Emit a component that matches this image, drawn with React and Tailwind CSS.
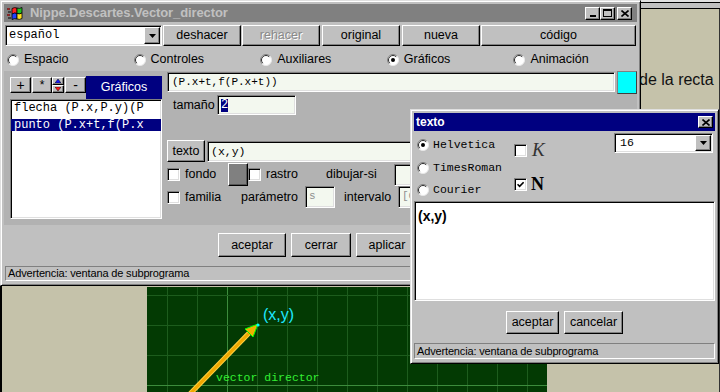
import React from "react";

const raised =
  "bg-[#c0c0c0] border border-t-white border-l-white border-r-black border-b-black shadow-[inset_-1px_-1px_0_#808080]";
const sunken =
  "border border-t-[#808080] border-l-[#808080] border-r-white border-b-white shadow-[inset_1px_1px_0_#000,inset_-1px_-1px_0_#dfdfdf]";
const thinSunken =
  "border border-t-[#808080] border-l-[#808080] border-r-white border-b-white";
const mono = "font-['Liberation_Mono','Courier_New',monospace]";

function Btn({ className = "", disabled, children }) {
  return (
    <div
      className={`flex items-center justify-center ${raised} ${
        disabled ? "text-[#8a8a8a] [text-shadow:1px_1px_0_#fff]" : "text-black"
      } ${className}`}
    >
      {children}
    </div>
  );
}

function Radio({ on }) {
  return (
    <svg width="12" height="12" viewBox="0 0 12 12" className="shrink-0">
      <circle cx="6" cy="6" r="5.6" fill="#fff" />
      <path d="M2.1 9.9A5.5 5.5 0 0 1 9.9 2.1" fill="none" stroke="#808080" strokeWidth="1" />
      <path d="M2.8 9.2A4.5 4.5 0 0 1 9.2 2.8" fill="none" stroke="#303030" strokeWidth="1" />
      <path d="M9.9 2.1A5.5 5.5 0 0 1 2.1 9.9" fill="none" stroke="#e8e8e8" strokeWidth="1" />
      {on && <circle cx="6" cy="6" r="2" fill="#000" />}
    </svg>
  );
}

function Check({ on }) {
  return (
    <div className={`flex h-[13px] w-[13px] shrink-0 items-center justify-center bg-white ${sunken}`}>
      {on && (
        <svg width="7" height="7" viewBox="0 0 7 7">
          <path d="M0.5 3.2 L2.6 5.4 L6.6 1.2" stroke="#000" strokeWidth="1.6" fill="none" />
        </svg>
      )}
    </div>
  );
}

function DropBtn() {
  return (
    <div className={`flex h-full w-[16px] shrink-0 items-center justify-center ${raised}`}>
      <svg width="7" height="4" viewBox="0 0 7 4">
        <path d="M0 0h7L3.5 4z" fill="#000" />
      </svg>
    </div>
  );
}

function CloseGlyph() {
  return (
    <svg width="8" height="7" viewBox="0 0 8 7">
      <path d="M0.5 0.5 L7.5 6.5 M7.5 0.5 L0.5 6.5" stroke="#000" strokeWidth="1.6" />
    </svg>
  );
}

function WinIcon() {
  return (
    <svg width="16" height="15" viewBox="0 0 16 15" className="shrink-0">
      <path d="M0 3h3M1 6h3M0 9h3M1 12h3" stroke="#000" strokeWidth="1" />
      <path d="M0.5 3h2M0.5 9h2" stroke="#f00" strokeWidth="1" />
      <path d="M5 2.5 Q7.5 1 10 2 V7.5 Q7.5 6.5 5 8 Z" fill="#ff2020" stroke="#000" strokeWidth="0.8" />
      <path d="M10 2 Q12.5 3 15 1.5 V7 Q12.5 8.5 10 7.5 Z" fill="#20c020" stroke="#000" strokeWidth="0.8" />
      <path d="M5 8 Q7.5 6.5 10 7.5 V13 Q7.5 12 5 13.5 Z" fill="#2040ff" stroke="#000" strokeWidth="0.8" />
      <path d="M10 7.5 Q12.5 8.5 15 7 V12.5 Q12.5 14 10 13 Z" fill="#ffe020" stroke="#000" strokeWidth="0.8" />
    </svg>
  );
}

function MainWindow() {
  const radios = ["Espacio", "Controles", "Auxiliares", "Gráficos", "Animación"];
  return (
    <div className="absolute left-0 top-0 z-10 flex h-[286px] w-[641px] flex-col border border-t-[#dfdfdf] border-l-[#dfdfdf] border-r-black border-b-black bg-[#c0c0c0] p-[3px] shadow-[inset_1px_1px_0_#fff,inset_-1px_-1px_0_#808080]">
      {/* title bar */}
      <div className="flex h-[18px] shrink-0 items-center bg-[#808080] pl-[3px] pr-[5px]">
        <WinIcon />
        <span className="ml-[7px] text-[13px] font-bold tracking-[-0.1px] text-[#c0c0c0]">
          Nippe.Descartes.Vector_director
        </span>
        <div className="ml-auto flex items-center">
          <div className={`flex h-[13px] w-[15px] items-end justify-center pb-[2px] ${raised}`}>
            <div className="h-[2px] w-[6px] bg-black" />
          </div>
          <div className={`flex h-[13px] w-[15px] items-center justify-center ${raised}`}>
            <div className="h-[8px] w-[9px] border border-t-2 border-black" />
          </div>
          <div className={`ml-[2px] flex h-[13px] w-[15px] items-center justify-center ${raised}`}>
            <CloseGlyph />
          </div>
        </div>
      </div>

      {/* top buttons */}
      <div className="mt-[3px] flex h-[21px] shrink-0 text-[12.5px]">
        <div className={`ml-[1px] flex w-[157px] bg-white p-[1px] ${sunken}`}>
          <span className={`${mono} flex-1 pl-[2px] text-[12px] leading-[17px]`}>español</span>
          <DropBtn />
        </div>
        <Btn className="ml-[1px] w-[78px]">deshacer</Btn>
        <Btn className="ml-[1px] w-[78px]" disabled>
          rehacer
        </Btn>
        <Btn className="ml-[2px] w-[78px]">original</Btn>
        <Btn className="ml-[2px] w-[78px]">nueva</Btn>
        <Btn className="ml-[1px] w-[155px]">código</Btn>
      </div>

      {/* sections */}
      <div className="mt-[2px] grid h-[23px] shrink-0 grid-cols-5 items-center text-[12.5px]">
        {radios.map((r) => (
          <div key={r} className="flex items-center gap-[5px] pl-[3px]">
            <Radio on={r === "Gráficos"} />
            <span>{r}</span>
          </div>
        ))}
      </div>

      {/* graphics panel */}
      <div className="flex h-[154px] shrink-0 bg-[#b2b2b2] text-[12.5px]">
        <div className="ml-[6px] mt-[5px] flex w-[152px] flex-col">
          <div className="flex h-[23px]">
            <div className="mt-[1px] flex h-[16px]">
              <Btn className="w-[21px] text-[14px]">+</Btn>
              <Btn className="ml-[1px] w-[20px] text-[12px]">*</Btn>
              <div className="flex w-[12px] flex-col">
                <div className={`flex h-[8px] items-center justify-center ${raised}`}>
                  <svg width="6" height="4" viewBox="0 0 6 4">
                    <path d="M0 4h6L3 0z" fill="#1a1aff" stroke="#000" strokeWidth="0.5" />
                  </svg>
                </div>
                <div className={`flex h-[8px] items-center justify-center ${raised}`}>
                  <svg width="6" height="4" viewBox="0 0 6 4">
                    <path d="M0 0h6L3 4z" fill="#ff1a1a" stroke="#000" strokeWidth="0.5" />
                  </svg>
                </div>
              </div>
              <Btn className="ml-[1px] w-[21px] text-[14px]">-</Btn>
            </div>
            <div className="flex flex-1 items-center justify-center bg-[#000080] text-white">Gráficos</div>
          </div>
          <div className={`h-[120px] bg-white pt-[1px] ${sunken} ${mono} text-[12px]`}>
            <div className="mt-[1px] h-[13px] whitespace-nowrap pl-[3px] leading-[13px]">flecha (P.x,P.y)(P</div>
            <div className="mt-[4px] h-[12px] whitespace-nowrap bg-[#000080] pl-[3px] leading-[12px] text-white">
              punto (P.x+t,f(P.x
            </div>
          </div>
        </div>

        <div className="ml-[5px] flex flex-1 flex-col">
          <div className="flex h-[23px] items-start">
            <div className={`mt-[1px] h-[20px] flex-1 bg-[#f3f8ef] pl-[4px] ${sunken} ${mono} text-[11px] leading-[18px]`}>
              (P.x+t,f(P.x+t))
            </div>
            <div className="ml-[2px] h-[23px] w-[20px] border border-t-[#808080] border-l-[#808080] border-r-[#404040] border-b-[#404040] bg-[#00ffff]" />
          </div>

          <div className="mt-[1px] flex h-[20px] items-center">
            <span className="w-[50px] pl-[6px]">tamaño</span>
            <div className={`flex h-[20px] w-[79px] items-center bg-[#f3f8ef] pl-[3px] ${sunken}`}>
              <span className={`${mono} bg-[#000080] text-[12px] leading-[13px] text-white`}>2</span>
            </div>
          </div>

          <div className="mt-[25px] flex h-[22px]">
            <Btn className="w-[38px]">texto</Btn>
            <div className={`ml-[2px] mt-[1px] h-[21px] flex-1 bg-[#f3f8ef] pl-[3px] ${sunken} ${mono} text-[11.5px] leading-[19px]`}>
              (x,y)
            </div>
          </div>

          <div className="mt-[1px] flex h-[23px] items-center">
            <div className="flex w-[61px] items-center gap-[5px]">
              <Check />
              <span>fondo</span>
            </div>
            <div className="h-[23px] w-[20px] border border-t-white border-l-white border-r-black border-b-black bg-[#808080] shadow-[inset_-1px_-1px_0_#555]" />
            <div className="flex w-[78px] items-center gap-[5px]">
              <Check />
              <span>rastro</span>
            </div>
            <span className="w-[68px]">dibujar-si</span>
            <div className={`h-[22px] flex-1 bg-[#f3f8ef] ${sunken}`} />
          </div>

          <div className="flex h-[22px] items-center">
            <div className="flex w-[74px] items-center gap-[5px]">
              <Check />
              <span>familia</span>
            </div>
            <span className="w-[64px]">parámetro</span>
            <div className={`h-[22px] w-[30px] bg-[#f3f8ef] pl-[3px] ${sunken} ${mono} text-[11px] leading-[19px] text-[#909090]`}>
              s
            </div>
            <span className="ml-[9px] w-[54px]">intervalo</span>
            <div className={`h-[22px] flex-1 bg-[#f3f8ef] pl-[3px] ${sunken} ${mono} text-[11px] leading-[19px] text-[#909090]`}>
              [0,1]
            </div>
          </div>
        </div>
      </div>

      {/* action buttons */}
      <div className="mt-[8px] flex h-[24px] shrink-0 gap-[5px] pl-[214px] text-[12.5px]">
        <Btn className="w-[68px]">aceptar</Btn>
        <Btn className="w-[60px]">cerrar</Btn>
        <Btn className="w-[62px]">aplicar</Btn>
        <Btn className="w-[62px]">ayuda</Btn>
      </div>

      <div className={`ml-[1px] mt-[9px] h-[15px] shrink-0 pl-[2px] text-[11px] leading-[13px] tracking-[-0.15px] ${thinSunken}`}>
        Advertencia: ventana de subprograma
      </div>
    </div>
  );
}

function TextDialog() {
  return (
    <div className="absolute left-[410px] top-[109px] z-20 flex h-[255px] w-[309px] flex-col border border-t-[#dfdfdf] border-l-[#dfdfdf] border-r-black border-b-black bg-[#c0c0c0] p-[3px] shadow-[inset_1px_1px_0_#fff,inset_-1px_-1px_0_#808080]">
      <div className="flex h-[18px] shrink-0 items-center bg-[#000080] pl-[2px] pr-[2px]">
        <span className="text-[12px] font-bold text-white">texto</span>
        <div className={`ml-auto flex h-[12px] w-[15px] items-center justify-center ${raised}`}>
          <CloseGlyph />
        </div>
      </div>

      <div className="flex h-[70px] shrink-0">
        <div className={`flex w-[100px] flex-col pl-[3px] pt-[2px] ${mono} text-[11.5px]`}>
          <div className="flex h-[23px] items-center gap-[4px]">
            <Radio on />
            <span>Helvetica</span>
          </div>
          <div className="flex h-[23px] items-center gap-[4px]">
            <Radio />
            <span>TimesRoman</span>
          </div>
          <div className="flex h-[22px] items-center gap-[4px]">
            <Radio />
            <span>Courier</span>
          </div>
        </div>
        <div className="flex w-[100px] flex-col">
          <div className="mt-[9px] flex h-[20px] items-center gap-[5px]">
            <Check />
            <span className="font-['Liberation_Serif',serif] text-[19px] italic leading-[20px] text-[#333]">K</span>
          </div>
          <div className="mt-[14px] flex h-[20px] items-center gap-[4px]">
            <Check on />
            <span className="font-['Liberation_Serif',serif] text-[18px] font-bold leading-[20px]">N</span>
          </div>
        </div>
        <div className={`mt-[2px] flex h-[20px] w-[99px] bg-white p-[1px] ${sunken}`}>
          <span className={`${mono} flex-1 pl-[4px] text-[11.5px] leading-[16px]`}>16</span>
          <DropBtn />
        </div>
      </div>

      <div className={`h-[100px] shrink-0 bg-white pl-[3px] pt-[2px] ${sunken}`}>
        <span className="text-[14px] font-bold leading-[16px]">(x,y)</span>
      </div>

      <div className="mt-[10px] flex h-[23px] shrink-0 justify-center gap-[5px] text-[12.5px]">
        <Btn className="w-[53px]">aceptar</Btn>
        <Btn className="w-[59px]">cancelar</Btn>
      </div>

      <div className={`mt-[9px] h-[16px] shrink-0 pl-[2px] text-[11px] leading-[14px] tracking-[-0.15px] ${thinSunken}`}>
        Advertencia: ventana de subprograma
      </div>
    </div>
  );
}

function Canvas() {
  const xs = Array.from({ length: 13 }, (_, i) => 20 + i * 30);
  const ys = [8, 38, 68];
  return (
    <svg className="absolute left-[147px] top-[287px]" width="400" height="105" viewBox="0 0 400 105">
      <rect width="400" height="105" fill="#033a03" />
      {xs.map((x) => (
        <line key={x} x1={x + 0.5} y1="0" x2={x + 0.5} y2="105" stroke={x === 80 ? "#3c8c3c" : "#1d5c1d"} />
      ))}
      {ys.map((y) => (
        <line key={y} x1="0" y1={y + 0.5} x2="400" y2={y + 0.5} stroke="#1d5c1d" />
      ))}
      <line x1="0" y1="98.5" x2="400" y2="98.5" stroke="#3c8c3c" />
      <line x1="38" y1="112" x2="104" y2="44" stroke="#ffd040" strokeWidth="5" />
      <line x1="38" y1="112" x2="104" y2="44" stroke="#f0a800" strokeWidth="3" />
      <path d="M111 37 L106 50 L98 42 Z" fill="#f0b000" stroke="#00ff00" strokeWidth="1" />
      <circle cx="111" cy="38" r="1.6" fill="#00ffff" />
      <text x="116" y="33" fill="#1ee8ff" fontSize="16" fontFamily="Liberation Sans, Arial, sans-serif">
        (x,y)
      </text>
      <text x="69" y="94" fill="#33ee33" fontSize="11.5" fontFamily="Liberation Mono, monospace">
        vector director
      </text>
    </svg>
  );
}

export default function App() {
  return (
    <div className="relative h-[392px] w-[720px] overflow-hidden bg-[#c5c2aa] font-['Liberation_Sans',Arial,sans-serif] text-black shadow-[inset_2px_0_0_#000,inset_-1px_0_0_#333]">
      <div className="absolute left-[640px] top-0 h-[9px] w-[80px] border-t-2 border-t-[#e0e0e0]">
        <div className="h-[7px] border-y border-black bg-[#c0c0c0]" />
      </div>
      <span className="absolute left-[639px] top-[72px] text-[16px] leading-[16px] text-[#111]">de la recta</span>
      <Canvas />
      <MainWindow />
      <TextDialog />
    </div>
  );
}
